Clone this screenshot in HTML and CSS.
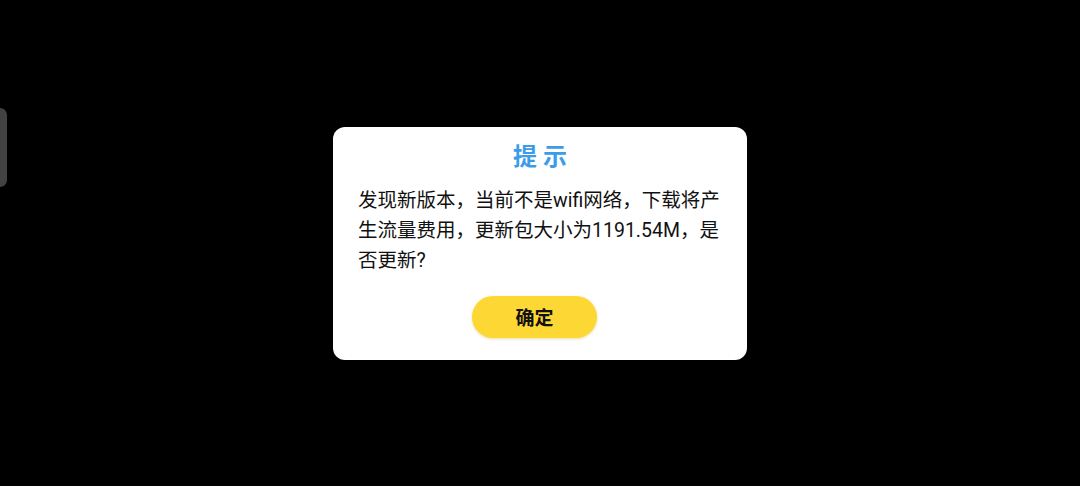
FILE: index.html
```html
<!DOCTYPE html>
<html lang="zh-CN">
<head>
<meta charset="utf-8">
<link rel="stylesheet" href="styles.css">
</head>
<body>
<div class="screen">
  <div class="side-handle"></div>
  <div class="dialog">
    <div class="dialog-title">提 示</div>
    <div class="dialog-body">发现新版本，当前不是wifi网络，下载将产生流量费用，更新包大小为1191.54M，是否更新?</div>
    <div class="dialog-actions">
      <button class="btn-confirm">确定</button>
    </div>
  </div>
</div>
</body>
</html>
```
FILE: styles.css
```css
html, body {
  margin: 0;
  padding: 0;
  background: #000;
}
.screen {
  position: relative;
  width: 1080px;
  height: 486px;
  display: flex;
  align-items: center;
  justify-content: center;
  font-family: Roboto, "Noto Sans CJK SC", sans-serif;
}
.side-handle {
  position: absolute;
  left: 0;
  top: 108px;
  width: 7px;
  height: 79px;
  background: #424242;
  border-radius: 0 7px 7px 0;
}
.dialog {
  width: 414px;
  box-sizing: border-box;
  background: #fff;
  border-radius: 12px;
  padding: 13px 25px 22px;
  display: flex;
  flex-direction: column;
}
.dialog-title {
  text-align: center;
  color: #3d9ce8;
  font-size: 24px;
  font-weight: 700;
  line-height: 34px;
  height: 34px;
  margin-bottom: 12px;
}
.dialog-body {
  color: #111;
  font-size: 19.5px;
  line-height: 30px;
}
.dialog-actions {
  display: flex;
  justify-content: center;
  margin-top: 20px;
  padding-right: 11px;
}
.btn-confirm {
  width: 125px;
  height: 42px;
  border: none;
  border-radius: 21px;
  background: #fdd835;
  box-shadow: 0 1px 3px rgba(200, 160, 0, 0.35);
  color: #111;
  font-family: Roboto, "Noto Sans CJK SC", sans-serif;
  font-size: 19px;
  font-weight: 700;
  padding: 0;
}
```
